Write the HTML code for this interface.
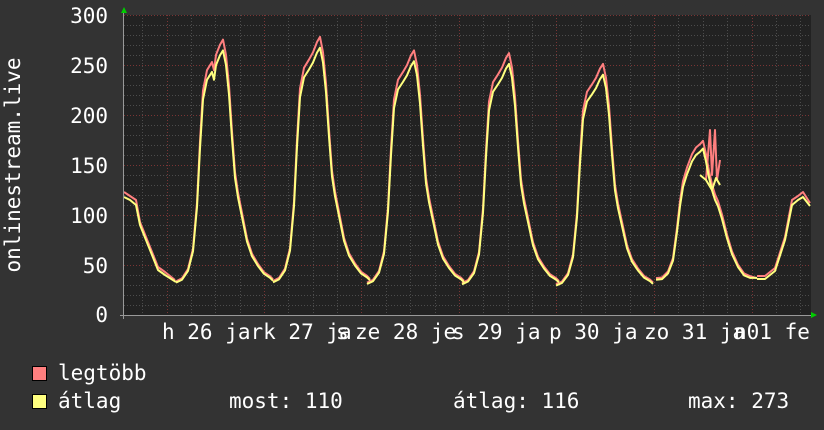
<!DOCTYPE html>
<html><head><meta charset="utf-8"><style>
html,body{margin:0;padding:0;background:#333;}
body{width:824px;height:430px;overflow:hidden;position:relative;font-family:"DejaVu Sans Mono","Liberation Mono",monospace;color:#fff;}
.t{position:absolute;font-size:21px;line-height:21px;white-space:pre;}
.y{right:716px;text-align:right;}
.sq{position:absolute;width:13px;height:13px;border:1px solid #000;}
</style></head><body>
<svg width="824" height="430" style="position:absolute;left:0;top:0">
<rect x="124" y="15" width="687" height="300" fill="#222"/>
<g stroke="#4c4c4c" stroke-dasharray="1,2" stroke-width="1">
<path d="M124,25.5H811M124,35.5H811M124,45.5H811M124,55.5H811M124,75.5H811M124,85.5H811M124,95.5H811M124,105.5H811M124,125.5H811M124,135.5H811M124,145.5H811M124,155.5H811M124,175.5H811M124,185.5H811M124,195.5H811M124,205.5H811M124,225.5H811M124,235.5H811M124,245.5H811M124,255.5H811M124,275.5H811M124,285.5H811M124,295.5H811M124,305.5H811"/>
<path d="M142.5,15V315M191.5,15V315M215.5,15V315M240.5,15V315M288.5,15V315M313.5,15V315M337.5,15V315M386.5,15V315M410.5,15V315M435.5,15V315M483.5,15V315M508.5,15V315M532.5,15V315M581.5,15V315M605.5,15V315M630.5,15V315M678.5,15V315M703.5,15V315M727.5,15V315M776.5,15V315M800.5,15V315"/>
</g>
<g stroke="#7a3535" stroke-dasharray="1,2" stroke-width="1">
<path d="M124,15.5H811M124,65.5H811M124,115.5H811M124,165.5H811M124,215.5H811M124,265.5H811"/>
<path d="M167.5,15V315M264.5,15V315M361.5,15V315M459.5,15V315M556.5,15V315M654.5,15V315M752.5,15V315"/>
</g>
<g fill="none" stroke-width="2" stroke-linejoin="round">
<g stroke="#ff7f7f">
<path d="M124,192 L130,196 L136,200 L140,222 L146,237 L152,252 L158,267 L165,272 L175,280" />
<path d="M757,276 L765,276 L775,268 L785,237 L792,200 L798,196 L803,192 L810,203"/>
<path d="M706,180 L710,130 L712,175 L715,130 L717,180 L720,160"/>
</g>
<path vector-effect="non-scaling-stroke" stroke="#ff7f7f" transform="translate(176,315) scale(1,-1.02)" d="M0,33 L6,36 L12,45 L17,65 L21,110 L24,170 L27,220 L31,240 L36,248 L38,240 L40,255 L44,265 L47,270 L50,255 L53,225 L56,180 L59,140 L62,120 L66,100 L71,75 L76,60 L82,50 L88,42 L94,38 L97,35"/>
<path vector-effect="non-scaling-stroke" stroke="#ff7f7f" transform="translate(273,315) scale(1,-1.03)" d="M0,33 L6,36 L12,45 L17,65 L21,110 L24,170 L27,220 L31,240 L36,248 L40,255 L44,265 L47,270 L50,255 L53,225 L56,180 L59,140 L62,120 L66,100 L71,75 L76,60 L82,50 L88,42 L94,38 L97,35"/>
<path vector-effect="non-scaling-stroke" stroke="#ff7f7f" transform="translate(367,315) scale(1,-0.98)" d="M0,33 L6,36 L12,45 L17,65 L21,110 L24,170 L27,220 L31,240 L36,248 L40,255 L44,265 L47,270 L50,255 L53,225 L56,180 L59,140 L62,120 L66,100 L71,75 L76,60 L82,50 L88,42 L94,38 L97,35"/>
<path vector-effect="non-scaling-stroke" stroke="#ff7f7f" transform="translate(462,315) scale(1,-0.97)" d="M0,33 L6,36 L12,45 L17,65 L21,110 L24,170 L27,220 L31,240 L36,248 L40,255 L44,265 L47,270 L50,255 L53,225 L56,180 L59,140 L62,120 L66,100 L71,75 L76,60 L82,50 L88,42 L94,38 L97,35"/>
<path vector-effect="non-scaling-stroke" stroke="#ff7f7f" transform="translate(556,315) scale(1,-0.93)" d="M0,33 L6,36 L12,45 L17,65 L21,110 L24,170 L27,220 L31,240 L36,248 L40,255 L44,265 L47,270 L50,255 L53,225 L56,180 L59,140 L62,120 L66,100 L71,75 L76,60 L82,50 L88,42 L94,38 L97,35"/>
<path vector-effect="non-scaling-stroke" stroke="#ff7f7f" transform="translate(656,315) scale(1,-0.67)" d="M0,55 L6,56 L12,65 L17,85 L21,130 L24,170 L27,200 L31,220 L36,240 L40,250 L44,255 L47,260 L50,240 L53,215 L56,195 L59,180 L62,170 L66,150 L71,120 L76,95 L82,75 L88,62 L94,58 L101,55"/>
<g stroke="#ffff7f">
<path d="M124,197 L130,200 L136,205 L140,225 L146,240 L152,255 L158,270 L165,275 L176,282"/>
<path d="M757,279 L765,279 L775,271 L785,240 L792,205 L798,200 L803,197 L810,206"/>
<path d="M700,175 L706,180 L712,190 L716,178 L720,185"/>
</g>
<path vector-effect="non-scaling-stroke" stroke="#ffff7f" transform="translate(176,315) scale(1,-0.98)" d="M0,33 L6,36 L12,45 L17,65 L21,110 L24,170 L27,220 L31,240 L36,248 L38,240 L40,255 L44,265 L47,270 L50,255 L53,225 L56,180 L59,140 L62,120 L66,100 L71,75 L76,60 L82,50 L88,42 L94,38 L97,35"/>
<path vector-effect="non-scaling-stroke" stroke="#ffff7f" transform="translate(273,315) scale(1,-0.99)" d="M0,33 L6,36 L12,45 L17,65 L21,110 L24,170 L27,220 L31,240 L36,248 L40,255 L44,265 L47,270 L50,255 L53,225 L56,180 L59,140 L62,120 L66,100 L71,75 L76,60 L82,50 L88,42 L94,38 L97,35"/>
<path vector-effect="non-scaling-stroke" stroke="#ffff7f" transform="translate(367,315) scale(1,-0.94)" d="M0,33 L6,36 L12,45 L17,65 L21,110 L24,170 L27,220 L31,240 L36,248 L40,255 L44,265 L47,270 L50,255 L53,225 L56,180 L59,140 L62,120 L66,100 L71,75 L76,60 L82,50 L88,42 L94,38 L97,35"/>
<path vector-effect="non-scaling-stroke" stroke="#ffff7f" transform="translate(462,315) scale(1,-0.93)" d="M0,33 L6,36 L12,45 L17,65 L21,110 L24,170 L27,220 L31,240 L36,248 L40,255 L44,265 L47,270 L50,255 L53,225 L56,180 L59,140 L62,120 L66,100 L71,75 L76,60 L82,50 L88,42 L94,38 L97,35"/>
<path vector-effect="non-scaling-stroke" stroke="#ffff7f" transform="translate(556,315) scale(1,-0.89)" d="M0,33 L6,36 L12,45 L17,65 L21,110 L24,170 L27,220 L31,240 L36,248 L40,255 L44,265 L47,270 L50,255 L53,225 L56,180 L59,140 L62,120 L66,100 L71,75 L76,60 L82,50 L88,42 L94,38 L97,35"/>
<path vector-effect="non-scaling-stroke" stroke="#ffff7f" transform="translate(656,315) scale(1,-0.64)" d="M0,55 L6,56 L12,65 L17,85 L21,130 L24,170 L27,200 L31,220 L36,240 L40,250 L44,255 L47,260 L50,240 L53,215 L56,195 L59,180 L62,170 L66,150 L71,120 L76,95 L82,75 L88,62 L94,58 L101,58"/>
</g>
<path d="M120,315.5H812M123.5,12V319" stroke="#999" stroke-width="1"/>
<polygon points="121,13 127,13 124,7" fill="#0c0"/>
<polygon points="811,312 811,318 817,315" fill="#0c0"/>
<text x="0" y="0" transform="translate(20,165) rotate(-90)" fill="#fff" font-family="DejaVu Sans Mono,monospace" font-size="21" text-anchor="middle">onlinestream.live</text>
</svg>
<div class="t y" style="top:6px">300</div>
<div class="t y" style="top:56px">250</div>
<div class="t y" style="top:106px">200</div>
<div class="t y" style="top:156px">150</div>
<div class="t y" style="top:206px">100</div>
<div class="t y" style="top:256px">50</div>
<div class="t y" style="top:305px">0</div>
<div class="t" style="top:322px;left:162px">h 26 jark 27 ja</div>
<div class="t" style="top:322px;left:355px">ze 28 je</div>
<div class="t" style="top:322px;left:336px">s</div>
<div class="t" style="top:322px;left:452px">s 29 ja</div>
<div class="t" style="top:322px;left:549px">p 30 ja</div>
<div class="t" style="top:322px;left:644px">zo 31 ja</div>
<div class="t" style="top:322px;left:734px">n01 fe</div>
<div class="sq" style="left:32px;top:366px;background:#ff7f7f"></div>
<div class="sq" style="left:32px;top:394px;background:#ffff7f"></div>
<div class="t" style="left:58px;top:363px">legtöbb</div>
<div class="t" style="left:58px;top:391px">átlag</div>
<div class="t" style="left:229px;top:391px">most: 110</div>
<div class="t" style="left:453px;top:391px">átlag: 116</div>
<div class="t" style="left:688px;top:391px">max: 273</div>
</body></html>
